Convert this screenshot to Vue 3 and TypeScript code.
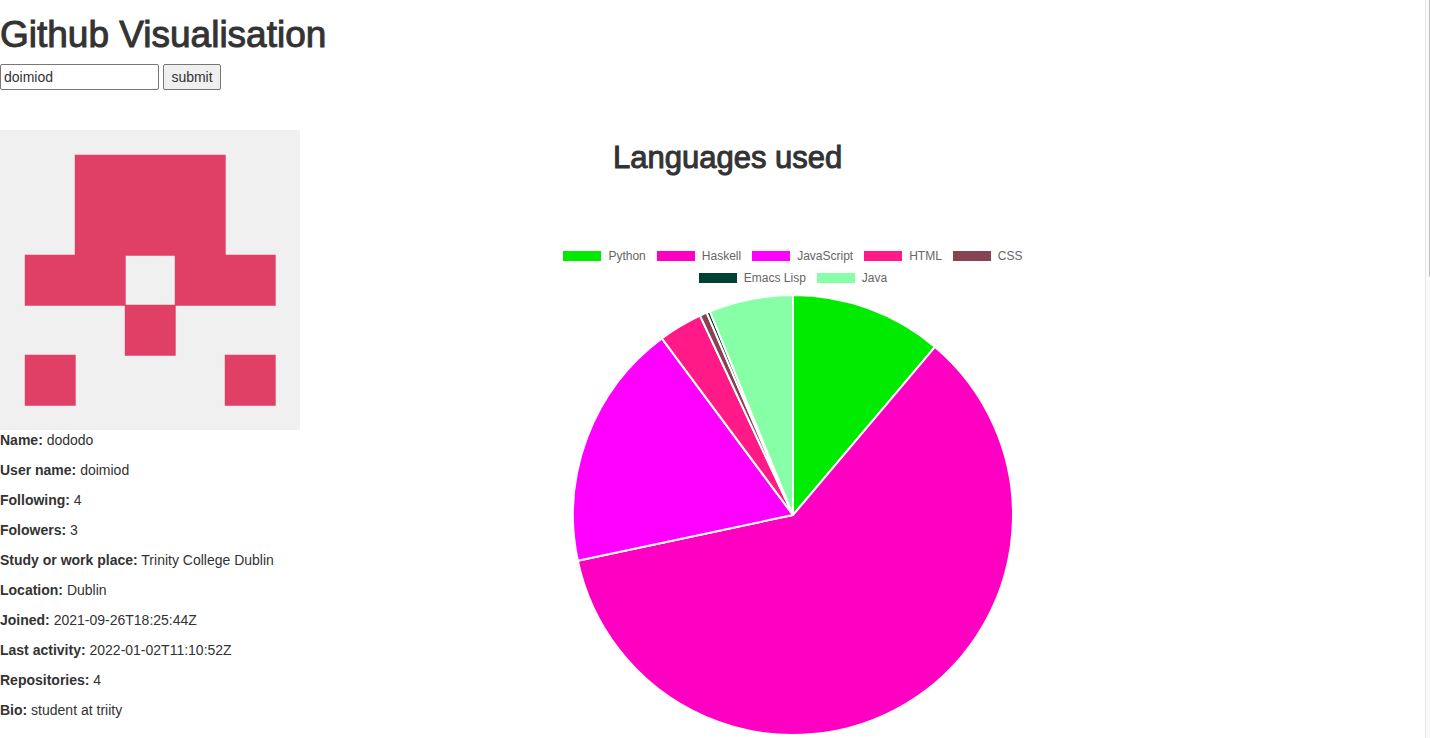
<script setup lang="ts">
import { computed, ref } from 'vue'

interface Language {
  name: string
  color: string
  end: number
}

interface Field {
  label: string
  value: string
}

const query = ref('doimiod')

const fields: Field[] = [
  { label: 'Name:', value: 'dododo' },
  { label: 'User name:', value: 'doimiod' },
  { label: 'Following:', value: '4' },
  { label: 'Folowers:', value: '3' },
  { label: 'Study or work place:', value: 'Trinity College Dublin' },
  { label: 'Location:', value: 'Dublin' },
  { label: 'Joined:', value: '2021-09-26T18:25:44Z' },
  { label: 'Last activity:', value: '2022-01-02T11:10:52Z' },
  { label: 'Repositories:', value: '4' },
  { label: 'Bio:', value: 'student at triity' },
]

// Each language ends at this angle, in degrees clockwise from the top.
const languages: Language[] = [
  { name: 'Python', color: '#00eb00', end: 40.2 },
  { name: 'Haskell', color: '#ff00c3', end: 258 },
  { name: 'JavaScript', color: '#ff00ff', end: 323.4 },
  { name: 'HTML', color: '#ff1a87', end: 335 },
  { name: 'CSS', color: '#874352', end: 336.9 },
  { name: 'Emacs Lisp', color: '#004231', end: 337.8 },
  { name: 'Java', color: '#87ffa6', end: 360 },
]

const radius = 220

function point(angle: number): string {
  const rad = (angle * Math.PI) / 180
  return `${(radius * Math.sin(rad)).toFixed(2)} ${(-radius * Math.cos(rad)).toFixed(2)}`
}

const slices = computed(() =>
  languages.map((lang, i) => {
    const start = i === 0 ? 0 : languages[i - 1].end
    const large = lang.end - start > 180 ? 1 : 0
    return {
      name: lang.name,
      color: lang.color,
      d: `M0 0L${point(start)}A${radius} ${radius} 0 ${large} 1 ${point(lang.end)}Z`,
    }
  }),
)

// Filled identicon cells as [column, row].
const cells: [number, number][] = [
  [1, 0], [2, 0], [3, 0],
  [1, 1], [2, 1], [3, 1],
  [0, 2], [1, 2], [3, 2], [4, 2],
  [2, 3],
  [0, 4], [4, 4],
]

// Cells overlap slightly so that neighbours join without a seam.
const avatarPath = cells
  .map(([col, row]) => `M${24.8 + col * 50} ${24.8 + row * 50}h50.9v50.9h-50.9z`)
  .join('')
</script>

<template>
  <div class="page">
    <main class="content">
      <h1>Github Visualisation</h1>
      <form class="search" @submit.prevent>
        <input v-model="query" type="text" aria-label="Github user name" />
        <button type="submit">submit</button>
      </form>

      <div class="columns">
        <section class="profile">
          <svg class="avatar" viewBox="0 0 300 300" role="img" aria-label="Avatar">
            <rect width="300" height="300" fill="#f0f0f0" />
            <path :d="avatarPath" fill="#e03f66" />
          </svg>
          <p v-for="field in fields" :key="field.label">
            <b>{{ field.label }}</b> {{ field.value }}
          </p>
        </section>

        <section class="chart">
          <h2>Languages used</h2>
          <ul class="legend">
            <li v-for="lang in languages" :key="lang.name">
              <span class="swatch" :style="{ backgroundColor: lang.color }"></span>
              {{ lang.name }}
            </li>
          </ul>
          <svg class="pie" viewBox="-240 -221 480 442" role="img" aria-label="Languages used">
            <path
              v-for="slice in slices"
              :key="slice.name"
              :d="slice.d"
              :fill="slice.color"
              stroke="#fff"
              stroke-width="2"
              stroke-linejoin="bevel"
            />
          </svg>
        </section>
      </div>
    </main>
    <div class="scrollbar" aria-hidden="true"><div class="thumb"></div></div>
  </div>
</template>

<style>
body {
  margin: 0;
  background: #fff;
}
</style>

<style scoped>
.page {
  display: flex;
  min-height: 100vh;
  font-family: "Liberation Sans", Arial, sans-serif;
  font-size: 14px;
  line-height: 20px;
  color: #333;
}

.content {
  flex: 1;
  min-width: 0;
  padding-top: 14px;
}

h1,
h2 {
  font-weight: 400;
  -webkit-text-stroke: 1px #333;
}

h1 {
  margin: 0 0 8px;
  font-size: 37px;
  line-height: 42px;
}

.search {
  display: flex;
  gap: 4px;
}

.search input,
.search button {
  box-sizing: border-box;
  height: 26px;
  margin: 0;
  border: 1px solid #767676;
  border-radius: 2px;
  font: inherit;
  color: inherit;
}

.search input {
  width: 159px;
  padding: 1px 3px;
  background: #fff;
}

.search button {
  width: 58px;
  padding: 1px 6px;
  background: #efefef;
}

.columns {
  display: grid;
  grid-template-columns: 553fr 480fr 392fr;
  margin-top: 40px;
}

.avatar {
  display: block;
  width: 300px;
  height: 300px;
}

.profile p {
  margin: 0 0 10px;
}

.profile p:last-child {
  margin-bottom: 0;
}

h2 {
  margin: 10px 0 75px 60px;
  font-size: 31px;
  line-height: 35px;
}

.legend {
  display: flex;
  flex-wrap: wrap;
  justify-content: center;
  gap: 10px 11px;
  margin: 0 0 10px;
  padding: 0;
  list-style: none;
  font-size: 12px;
  line-height: 12px;
  color: #666;
}

.legend li {
  display: flex;
  align-items: center;
  gap: 7px;
}

.swatch {
  width: 38px;
  height: 10px;
}

.pie {
  display: block;
  width: 100%;
}

.scrollbar {
  box-sizing: border-box;
  width: 5px;
  border-left: 1px solid #e6e6e6;
  background: #fafafa;
}

.thumb {
  width: 1px;
  height: 277px;
  margin-left: auto;
  border-bottom-left-radius: 1px;
  background: #c1c1c1;
}
</style>
